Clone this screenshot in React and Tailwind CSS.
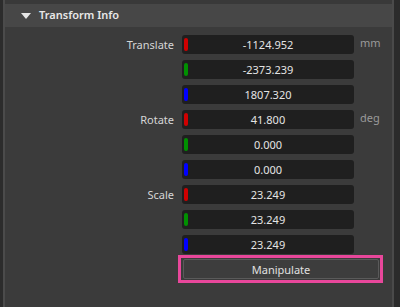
import React from 'react'

const font = { fontFamily: '"Noto Sans", "Open Sans", Arial, sans-serif' }

const rows = [
  { label: 'Translate', unit: 'mm', value: '-1124.952', axis: 'x' },
  { label: '', unit: '', value: '-2373.239', axis: 'y' },
  { label: '', unit: '', value: '1807.320', axis: 'z' },
  { label: 'Rotate', unit: 'deg', value: '41.800', axis: 'x' },
  { label: '', unit: '', value: '0.000', axis: 'y' },
  { label: '', unit: '', value: '0.000', axis: 'z' },
  { label: 'Scale', unit: '', value: '23.249', axis: 'x' },
  { label: '', unit: '', value: '23.249', axis: 'y' },
  { label: '', unit: '', value: '23.249', axis: 'z' },
]

const axisColor = {
  x: 'bg-[#d00000]',
  y: 'bg-[#009000]',
  z: 'bg-[#0000ff]',
}

// One labelled numeric field with its axis marker
const FieldRow = ({ label, unit, value, axis }) => (
  <div className="flex items-center h-[19px]">
    <div className="w-[170px] text-right text-[11px] text-[#d6d6d6] leading-none pr-[1px]">{label}</div>
    <div className="ml-[7px] w-[172px] h-[19px] rounded-[3px] bg-[#1f1f1f] flex items-center relative">
      <div className={`absolute left-[2px] top-[3px] w-[4px] h-[13px] rounded-[2px] ${axisColor[axis]}`} />
      <div className="flex-1 text-center text-[11px] text-[#e4e4e4] leading-none">{value}</div>
    </div>
    <div className="ml-[6px] text-[11px] text-[#9a9a9a] leading-none -mt-[4px]">{unit}</div>
  </div>
)

export default function App() {
  return (
    <div className="w-[400px] h-[307px] flex bg-[#3b3b3b] overflow-hidden" style={font}>
      <div className="w-[3px] bg-[#2c2c2c]" />
      <div className="w-[2px] bg-[#4b4b4b]" />

      <div className="flex-1 flex flex-col bg-[#3b3b3b]">
        <div className="h-[4px] bg-[#393939]" />
        <div className="h-[23px] bg-[#474747] flex items-center">
          <svg className="ml-[16px]" width="10" height="6" viewBox="0 0 10 6">
            <path d="M0 0 L10 0 L5 6 Z" fill="#e6e6e6" />
          </svg>
          <span className="ml-[8px] text-[11px] font-semibold text-[#e8e8e8]">Transform Info</span>
        </div>

        <div className="flex flex-col gap-[6px] pt-[8px]">
          {rows.map((r, i) => (
            <FieldRow key={i} {...r} />
          ))}
        </div>

        <div className="mt-[1px] ml-[173px] w-[205px] h-[28px] border-[3px] border-[#e8479b] flex items-center pl-[2px] pr-[1px]">
          <button className="w-full h-[20px] rounded-[2px] bg-[#3d3d3d] border border-[#5a5a5a] text-[11px] text-[#e0e0e0] leading-none">
            Manipulate
          </button>
        </div>
      </div>

      <div className="w-[2px] bg-[#4a4a4a]" />
      <div className="w-[6px] bg-[#2b2b2b]" />
    </div>
  )
}
